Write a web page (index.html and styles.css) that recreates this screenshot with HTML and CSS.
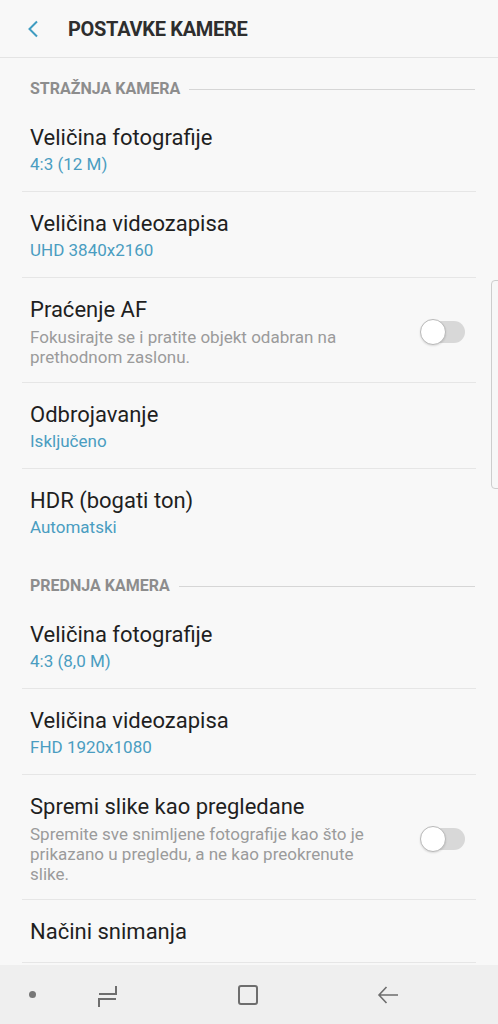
FILE: index.html
```html
<!DOCTYPE html>
<html lang="hr">
<head>
  <meta charset="UTF-8">
  <meta name="viewport" content="width=device-width, initial-scale=1.0">
  <title>Postavke kamere</title>
  <link rel="stylesheet" href="styles.css">
</head>
<body>
  <div class="screen">
    <header class="topbar">
      <svg class="back" width="14" height="18" viewBox="0 0 14 18">
        <path d="M11 1.5 L3.5 9 L11 16.5" fill="none" stroke="#3f9cc1" stroke-width="2"/>
      </svg>
      <h1>POSTAVKE KAMERE</h1>
    </header>

    <main class="content">
      <div class="section-title"><span>STRAŽNJA KAMERA</span></div>
      <div class="group">
        <div class="row">
          <div class="text">
            <div class="label">Veličina fotografije</div>
            <div class="value">4:3 (12 M)</div>
          </div>
        </div>
        <div class="row">
          <div class="text">
            <div class="label">Veličina videozapisa</div>
            <div class="value">UHD 3840x2160</div>
          </div>
        </div>
        <div class="row">
          <div class="text">
            <div class="label">Praćenje AF</div>
            <div class="desc">Fokusirajte se i pratite objekt odabran na prethodnom zaslonu.</div>
          </div>
          <span class="switch"></span>
        </div>
        <div class="row">
          <div class="text">
            <div class="label">Odbrojavanje</div>
            <div class="value">Isključeno</div>
          </div>
        </div>
        <div class="row last">
          <div class="text">
            <div class="label">HDR (bogati ton)</div>
            <div class="value">Automatski</div>
          </div>
        </div>
      </div>

      <div class="section-title"><span>PREDNJA KAMERA</span></div>
      <div class="group">
        <div class="row">
          <div class="text">
            <div class="label">Veličina fotografije</div>
            <div class="value">4:3 (8,0 M)</div>
          </div>
        </div>
        <div class="row">
          <div class="text">
            <div class="label">Veličina videozapisa</div>
            <div class="value">FHD 1920x1080</div>
          </div>
        </div>
        <div class="row">
          <div class="text">
            <div class="label">Spremi slike kao pregledane</div>
            <div class="desc">Spremite sve snimljene fotografije kao što je prikazano u pregledu, a ne kao preokrenute slike.</div>
          </div>
          <span class="switch"></span>
        </div>
        <div class="row single">
          <div class="text">
            <div class="label">Načini snimanja</div>
          </div>
        </div>
      </div>
    </main>

    <div class="scroll-thumb"></div>

    <nav class="navbar">
      <span class="dot"></span>
      <svg class="nav-recent" width="22" height="24" viewBox="0 0 22 24">
        <path d="M2 10 H19 V2 M19 15 H2 V23" fill="none" stroke="#6e6e6e" stroke-width="2"/>
      </svg>
      <svg class="nav-home" width="22" height="22" viewBox="0 0 22 22">
        <rect x="2" y="2" width="18" height="18" rx="2" fill="none" stroke="#6e6e6e" stroke-width="2"/>
      </svg>
      <svg class="nav-back" width="22" height="20" viewBox="0 0 22 20">
        <path d="M21 10 H2 M9.5 2 L2 10 L9.5 18" fill="none" stroke="#6e6e6e" stroke-width="1.6"/>
      </svg>
    </nav>
  </div>
</body>
</html>
```

FILE: styles.css
```css
body {
  margin: 0;
  padding: 0;
  font-family: Roboto, "Liberation Sans", sans-serif;
  background-color: #f8f8f8;
}
.screen {
  position: relative;
  height: 1024px;
  display: flex;
  flex-direction: column;
  overflow: hidden;
}
.topbar {
  height: 57px;
  flex: none;
  display: flex;
  align-items: center;
  border-bottom: 1px solid #e4e4e4;
}
.back {
  margin-left: 26px;
  margin-top: 1px;
}
.topbar h1 {
  margin: 0 0 0 28px;
  font-size: 20px;
  font-weight: bold;
  color: #2e2e2e;
  letter-spacing: -0.3px;
}
.content {
  flex: 1;
  overflow: hidden;
}
.section-title {
  display: flex;
  align-items: center;
  margin: 0 23px 0 30px;
  padding: 22px 0 8px;
  line-height: 18px;
  font-size: 16px;
  font-weight: bold;
  color: #8d8d8d;
}
.section-title::after {
  content: "";
  flex: 1;
  height: 1px;
  margin-left: 9px;
  background-color: #d6d6d6;
}
.group {
  margin: 0 22px;
}
.row {
  display: flex;
  align-items: center;
  padding: 18px 11px 15px 8px;
  border-bottom: 1px solid #e6e6e6;
}
.row.last {
  border-bottom-color: transparent;
}
.row.single {
  padding-bottom: 16px;
}
.text {
  width: 362px;
}
.label {
  font-size: 22px;
  line-height: 28px;
  color: #1f1f1f;
}
.value {
  font-size: 17px;
  line-height: 24px;
  color: #4a9dc1;
}
.desc {
  margin-top: 3px;
  font-size: 17px;
  line-height: 20px;
  color: #9b9b9b;
}
.switch {
  position: relative;
  margin-left: auto;
  width: 44px;
  height: 22px;
  border-radius: 11px;
  background-color: #d8d8d8;
}
.switch::before {
  content: "";
  position: absolute;
  left: -1px;
  top: -2px;
  width: 24px;
  height: 24px;
  border-radius: 50%;
  background-color: #fff;
  border: 1px solid #b9b9b9;
  box-shadow: 0 1px 2px rgba(0, 0, 0, 0.12);
}
.scroll-thumb {
  position: absolute;
  right: -4px;
  top: 280px;
  width: 9px;
  height: 207px;
  border: 1px solid #cdcdcd;
  border-radius: 4px;
  background-color: #f7f7f7;
}
.navbar {
  height: 59px;
  flex: none;
  display: flex;
  align-items: center;
  background-color: #efefef;
}
.dot {
  width: 7px;
  height: 7px;
  margin-left: 29px;
  border-radius: 50%;
  background-color: #777;
}
.nav-recent {
  margin-left: 61px;
  margin-top: 2px;
}
.nav-home {
  margin-left: 118px;
}
.nav-back {
  margin-left: 118px;
}
```
